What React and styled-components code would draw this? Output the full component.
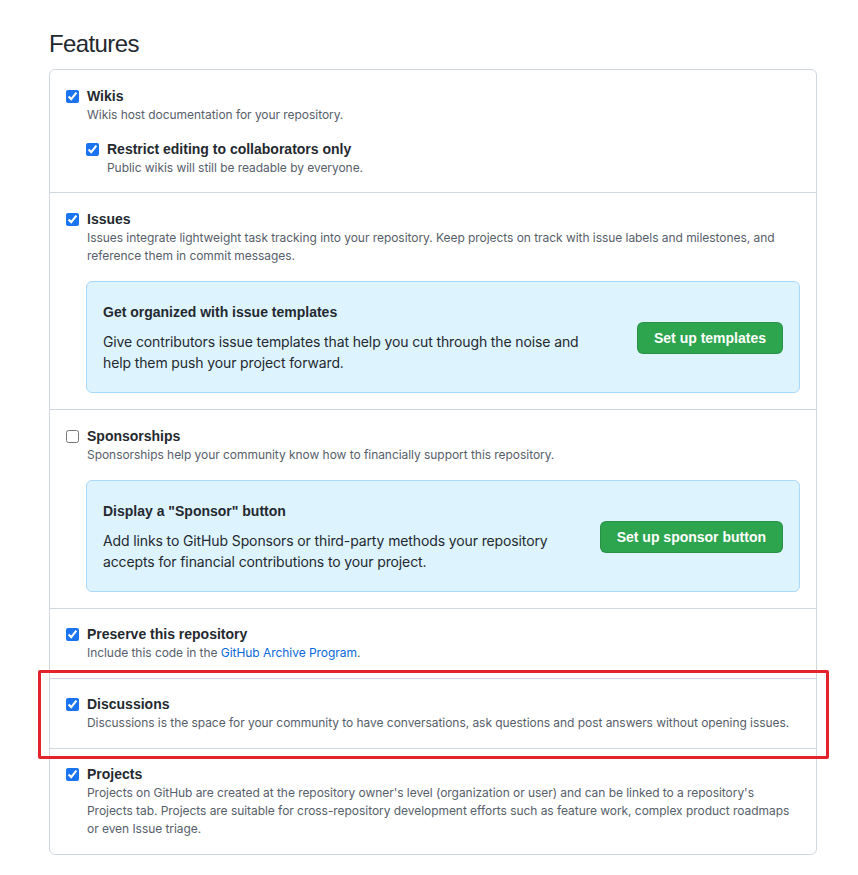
import React from 'react';
import styled, { createGlobalStyle } from 'styled-components';

const GlobalStyle = createGlobalStyle`
  body {
    margin: 0;
    background: #ffffff;
    font-family: Inter, "Liberation Sans", Arial, sans-serif;
    color: #24292f;
  }
`;

const boldFont = `"Liberation Sans", Arial, sans-serif`;

const Page = styled.div`
  padding: 28px 41px 20px 49px;
`;

const Heading = styled.h2`
  margin: 0 0 9px;
  font-family: ${boldFont};
  font-size: 24px;
  line-height: 32px;
  font-weight: 400;
  letter-spacing: -0.6px;
  color: #24292f;
`;

const Box = styled.div`
  border: 1px solid #d0d7de;
  border-radius: 6px;
`;

const Section = styled.div`
  position: relative;
  padding: ${p => p.$pad || '16px'};
  & + & {
    border-top: 1px solid #d0d7de;
  }
`;

const Highlight = styled.div`
  position: absolute;
  top: -9px;
  bottom: -11px;
  left: -12px;
  right: -13px;
  border: 3px solid #e3242b;
  border-radius: 2px;
  pointer-events: none;
`;

const Row = styled.label`
  display: flex;
  align-items: flex-start;
  gap: 8px;
  margin-top: ${p => (p.$nested ? '15px' : '0')};
  margin-left: ${p => (p.$nested ? '20px' : '0')};
`;

const Check = styled.input.attrs({ type: 'checkbox' })`
  width: 13px;
  height: 13px;
  margin: 4px 0 0;
  flex-shrink: 0;
  accent-color: #1a73f0;
`;

const Text = styled.div`
  flex: 1;
`;

const Title = styled.div`
  font-family: ${boldFont};
  font-size: 14px;
  line-height: 20px;
  font-weight: 700;
  color: #24292f;
`;

const Note = styled.p`
  margin: 0;
  font-size: 12px;
  line-height: 18px;
  letter-spacing: -0.05px;
  color: #57606a;
`;

const Link = styled.a`
  color: #0969da;
  text-decoration: none;
`;

const Callout = styled.div`
  display: flex;
  align-items: center;
  margin: 16px 0 0 20px;
  padding: 20px 16px 19px;
  background: #ddf4ff;
  border: 1px solid #a8d8fb;
  border-radius: 6px;
`;

const CalloutText = styled.div`
  flex: 1;
  margin-right: 40px;
`;

const CalloutTitle = styled.div`
  font-family: ${boldFont};
  font-size: 14px;
  line-height: 21px;
  font-weight: 700;
  color: #24292f;
  margin-bottom: 8px;
`;

const CalloutBody = styled.p`
  margin: 0;
  font-size: 14px;
  line-height: 21px;
  letter-spacing: -0.12px;
  color: #24292f;
`;

const GreenButton = styled.button`
  flex-shrink: 0;
  height: 32px;
  padding: 0 16px;
  font-family: ${boldFont};
  font-size: 14px;
  font-weight: 700;
  color: #ffffff;
  background: #2da44e;
  border: 1px solid rgba(27, 31, 36, 0.15);
  border-radius: 6px;
  cursor: pointer;
`;

function Feature({ title, checked, nested, children }) {
  return (
    <Row $nested={nested}>
      <Check defaultChecked={checked} />
      <Text>
        <Title>{title}</Title>
        <Note>{children}</Note>
      </Text>
    </Row>
  );
}

export default function App() {
  return (
    <Page>
      <GlobalStyle />
      <Heading>Features</Heading>
      <Box>
        <Section $pad="16px 16px 15px">
          <Feature title="Wikis" checked>Wikis host documentation for your repository.</Feature>
          <Feature title="Restrict editing to collaborators only" checked nested>
            Public wikis will still be readable by everyone.
          </Feature>
        </Section>
        <Section>
          <Feature title="Issues" checked>
            Issues integrate lightweight task tracking into your repository. Keep projects on track with issue labels and milestones, and reference them in commit messages.
          </Feature>
          <Callout>
            <CalloutText>
              <CalloutTitle>Get organized with issue templates</CalloutTitle>
              <CalloutBody>
                Give contributors issue templates that help you cut through the noise and help them push your project forward.
              </CalloutBody>
            </CalloutText>
            <GreenButton>Set up templates</GreenButton>
          </Callout>
        </Section>
        <Section>
          <Feature title="Sponsorships">
            Sponsorships help your community know how to financially support this repository.
          </Feature>
          <Callout>
            <CalloutText>
              <CalloutTitle>Display a "Sponsor" button</CalloutTitle>
              <CalloutBody>
                Add links to GitHub Sponsors or third-party methods your repository accepts for financial contributions to your project.
              </CalloutBody>
            </CalloutText>
            <GreenButton>Set up sponsor button</GreenButton>
          </Callout>
        </Section>
        <Section $pad="15px 16px 16px">
          <Feature title="Preserve this repository" checked>
            Include this code in the <Link href="#">GitHub Archive Program</Link>.
          </Feature>
        </Section>
        <Section $pad="15px 16px 16px">
          <Feature title="Discussions" checked>
            Discussions is the space for your community to have conversations, ask questions and post answers without opening issues.
          </Feature>
          <Highlight />
        </Section>
        <Section $pad="15px 16px 16px">
          <Feature title="Projects" checked>
            Projects on GitHub are created at the repository owner's level (organization or user) and can be linked to a repository's Projects tab. Projects are suitable for cross-repository development efforts such as feature work, complex product roadmaps or even Issue triage.
          </Feature>
        </Section>
      </Box>
    </Page>
  );
}
